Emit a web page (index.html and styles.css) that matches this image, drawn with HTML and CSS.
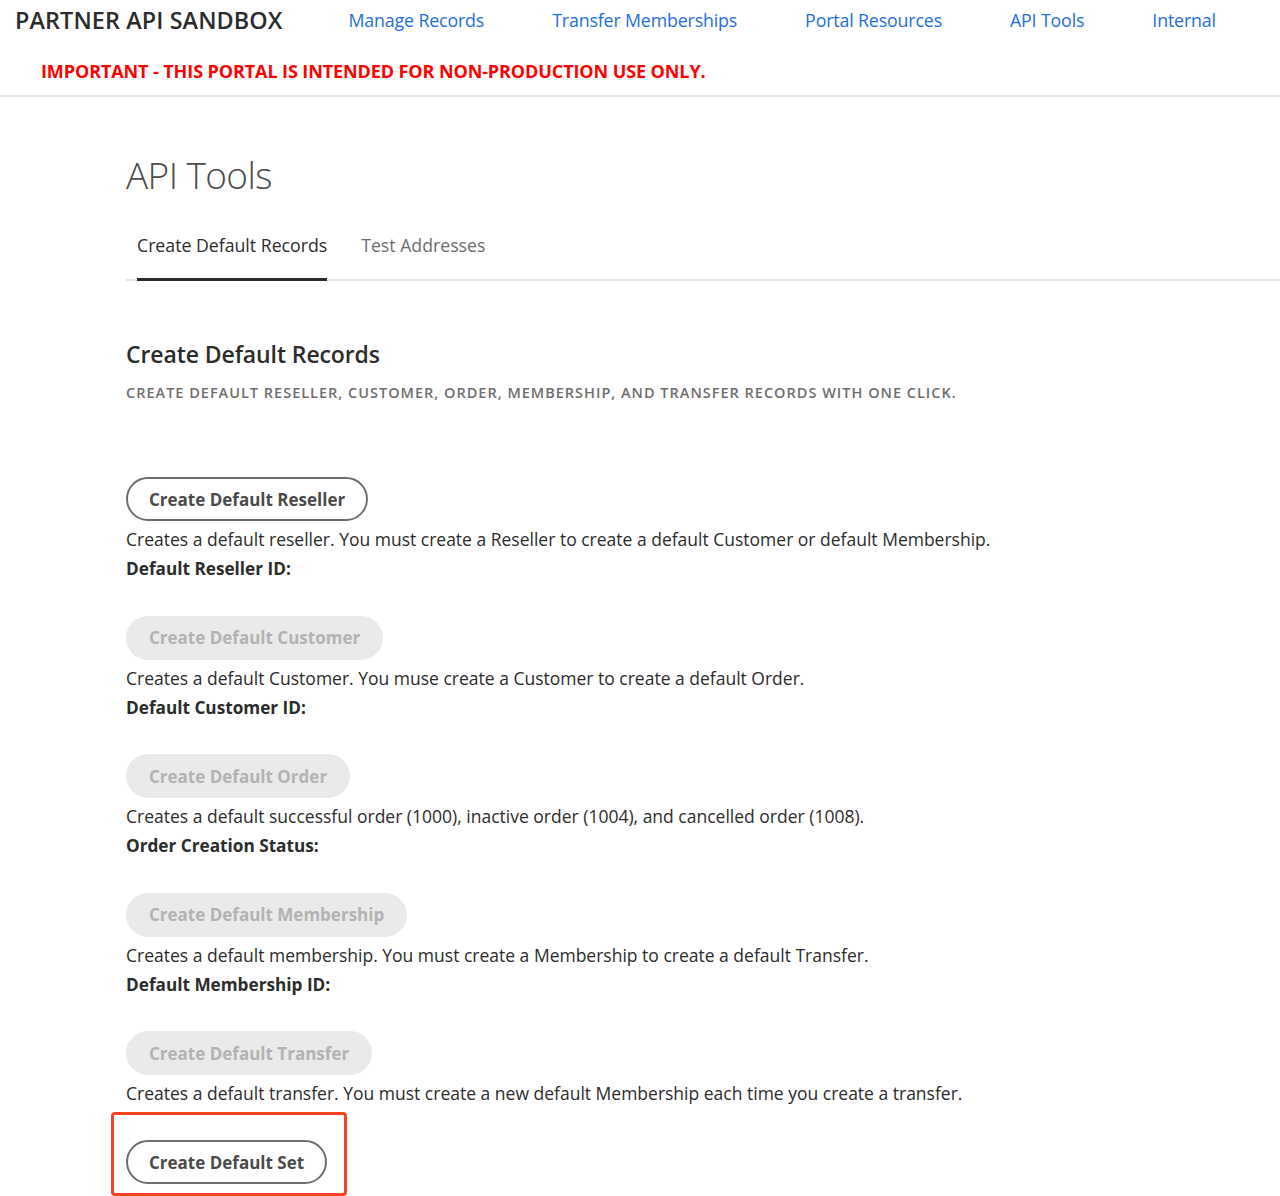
FILE: index.html
```html
<!DOCTYPE html>
<html lang="en">
<head>
    <meta charset="UTF-8">
    <meta name="viewport" content="width=device-width, initial-scale=1.0">
    <title>Partner API Sandbox - API Tools</title>
    <link rel="stylesheet" href="styles.css">
</head>
<body>

<header class="site-header">
    <div class="header-top">
        <span class="brand">PARTNER API SANDBOX</span>
        <nav class="main-nav">
            <a href="#">Manage Records</a>
            <a href="#">Transfer Memberships</a>
            <a href="#">Portal Resources</a>
            <a href="#">API Tools</a>
            <a href="#">Internal</a>
        </nav>
    </div>
    <div class="warning">IMPORTANT - THIS PORTAL IS INTENDED FOR NON-PRODUCTION USE ONLY.</div>
</header>

<main class="container">
    <h1 class="page-title">API Tools</h1>

    <!-- Pestañas -->
    <div class="tabs">
        <span class="tab active">Create Default Records</span>
        <span class="tab">Test Addresses</span>
    </div>

    <h2 class="section-title">Create Default Records</h2>
    <p class="section-sub">Create default reseller, customer, order, membership, and transfer records with one click.</p>

    <div class="records">
        <div class="record">
            <button class="pill-btn">Create Default Reseller</button>
            <p class="desc">Creates a default reseller. You must create a Reseller to create a default Customer or default Membership.</p>
            <p class="label">Default Reseller ID:</p>
        </div>

        <div class="record">
            <button class="pill-btn" disabled>Create Default Customer</button>
            <p class="desc">Creates a default Customer. You muse create a Customer to create a default Order.</p>
            <p class="label">Default Customer ID:</p>
        </div>

        <div class="record">
            <button class="pill-btn" disabled>Create Default Order</button>
            <p class="desc">Creates a default successful order (1000), inactive order (1004), and cancelled order (1008).</p>
            <p class="label">Order Creation Status:</p>
        </div>

        <div class="record">
            <button class="pill-btn" disabled>Create Default Membership</button>
            <p class="desc">Creates a default membership. You must create a Membership to create a default Transfer.</p>
            <p class="label">Default Membership ID:</p>
        </div>

        <div class="record last">
            <button class="pill-btn" disabled>Create Default Transfer</button>
            <p class="desc">Creates a default transfer. You must create a new default Membership each time you create a transfer.</p>
        </div>
    </div>

    <div class="highlight">
        <button class="pill-btn">Create Default Set</button>
    </div>
</main>

</body>
</html>
```

FILE: styles.css
```css
body {
    font-family: 'Open Sans', 'Liberation Sans', sans-serif;
    margin: 0;
    padding: 0;
    background-color: #fff;
    color: #2c2c2c;
}
p {
    margin: 0;
}
.site-header {
    padding: 0 15px 9px;
    border-bottom: 2px solid #e6e6e6;
}
.header-top {
    height: 40px;
    display: flex;
    align-items: center;
    gap: 66px;
}
.brand {
    font-size: 23.4px;
    font-weight: 600;
    color: #2c2c2c;
    letter-spacing: 0.1px;
}
.main-nav {
    display: flex;
    gap: 68px;
}
.main-nav a {
    color: #1f6fd9;
    text-decoration: none;
    font-size: 17.8px;
    letter-spacing: -0.15px;
}
.warning {
    margin-top: 16px;
    padding-left: 26px;
    line-height: 30px;
    font-size: 18px;
    font-weight: 700;
    color: #ff0000;
    letter-spacing: -0.1px;
}
.container {
    padding-left: 126px;
}
.page-title {
    margin: 55px 0 0;
    font-size: 37px;
    line-height: 46px;
    font-weight: 300;
    color: #4b4b4b;
    letter-spacing: -0.6px;
}
.tabs {
    margin-top: 32px;
    display: flex;
    gap: 34px;
    border-bottom: 2px solid #e6e6e6;
    padding-left: 11px;
}
.tab {
    font-size: 17.7px;
    line-height: 30px;
    padding-bottom: 18px;
    border-bottom: 3px solid transparent;
    margin-bottom: -2px;
    color: #6e6e6e;
}
.tab.active {
    color: #2c2c2c;
    border-bottom-color: #2c2c2c;
}
.section-title {
    margin: 58px 0 0;
    font-size: 23px;
    line-height: 30px;
    font-weight: 600;
    color: #2c2c2c;
    letter-spacing: -0.1px;
}
.section-sub {
    margin-top: 14px;
    font-size: 14.5px;
    line-height: 20px;
    font-weight: 600;
    text-transform: uppercase;
    letter-spacing: 1px;
    color: #6e6e6e;
}
.records {
    margin-top: 74px;
}
.record {
    margin-bottom: 31.5px;
}
.record.last {
    margin-bottom: 0;
}
.pill-btn {
    font-family: inherit;
    height: 44px;
    padding: 0 21px;
    border: 2px solid #6e6e6e;
    border-radius: 22px;
    background-color: #fff;
    color: #4b4b4b;
    font-size: 17px;
    font-weight: 700;
    cursor: pointer;
}
.pill-btn:disabled {
    border-color: #eaeaea;
    background-color: #eaeaea;
    color: #b3b3b3;
    cursor: default;
}
.desc {
    margin-top: 3px;
    font-size: 17.5px;
    line-height: 30px;
    color: #2c2c2c;
}
.label {
    font-size: 17.2px;
    line-height: 30px;
    font-weight: 700;
    color: #2c2c2c;
}
.highlight {
    display: inline-block;
    margin: 4px 0 0 -15px;
    padding: 25px 17px 9px 12px;
    border: 3px solid #fa4220;
    border-radius: 4px;
}
```
